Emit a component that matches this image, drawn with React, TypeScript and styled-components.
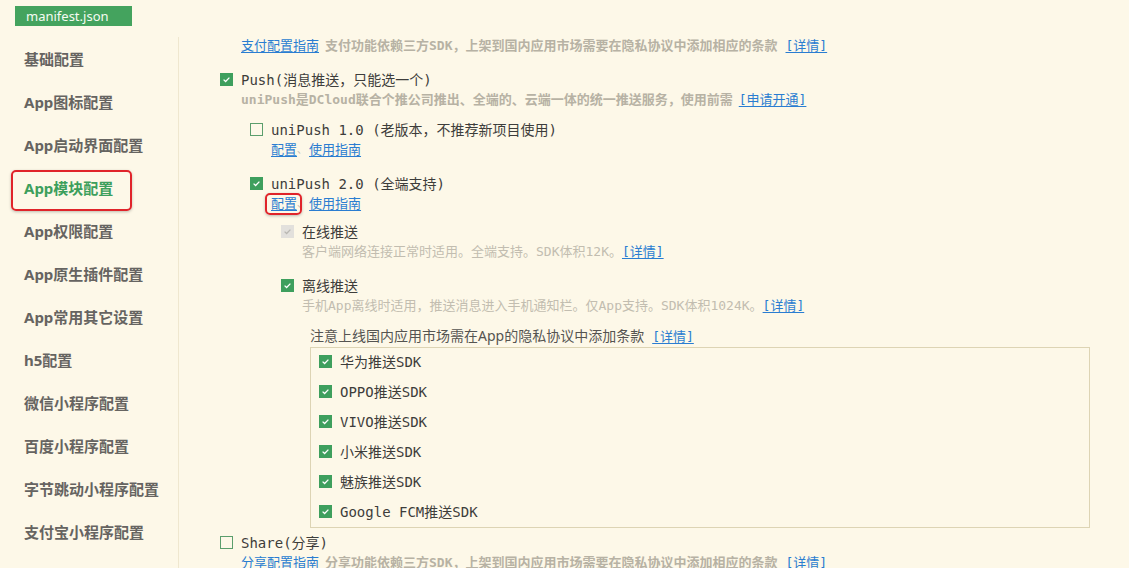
import React from 'react';
import styled, { createGlobalStyle } from 'styled-components';

const GlobalStyle = createGlobalStyle`
  html, body {
    margin: 0;
    padding: 0;
    background: #fdf8e8;
  }
  body {
    width: 1129px;
    height: 568px;
    overflow: hidden;
    font-family: 'DejaVu Sans Mono', 'Noto Sans CJK SC', monospace;
  }
`;

const MONO = `'DejaVu Sans Mono', 'Noto Sans CJK SC', monospace`;
const SANS = `'Noto Sans', 'Noto Sans CJK SC', sans-serif`;

const Page = styled.div`
  display: flex;
  flex-direction: column;
  width: 1129px;
  height: 568px;
  background: #fdf8e8;
  overflow: hidden;
`;

const Header = styled.div`
  height: 34px;
  flex-shrink: 0;
  display: flex;
  align-items: flex-start;
  padding: 6px 0 0 15px;
  box-sizing: border-box;
`;

const FileTab = styled.div`
  width: 117px;
  height: 20px;
  background: #44a35e;
  color: #f4fbf2;
  font-family: ${SANS};
  font-size: 13px;
  line-height: 20px;
  padding-left: 11px;
  box-sizing: border-box;
`;

const Body = styled.div`
  flex: 1;
  display: flex;
  min-height: 0;
`;

const Sidebar = styled.nav`
  width: 179px;
  flex-shrink: 0;
  margin-top: 3px;
  border-right: 1px solid #efe7cf;
  box-sizing: border-box;
  display: flex;
  flex-direction: column;
`;

const NavItem = styled.div<{ $active?: boolean }>`
  height: 43px;
  flex-shrink: 0;
  display: flex;
  align-items: center;
  padding-left: 24px;
  font-family: ${SANS};
  font-size: 15px;
  font-weight: 700;
  color: ${(p) => (p.$active ? '#3d9f5c' : '#666461')};
  position: relative;
`;

const Highlight = styled.span`
  position: absolute;
  left: 11px;
  top: 4px;
  width: 121px;
  height: 41px;
  border: 2px solid #e0242a;
  border-radius: 5px;
  box-sizing: border-box;
  box-shadow: 0 1px 3px rgba(0, 0, 0, 0.25);
`;

const Content = styled.main`
  flex: 1;
  padding-left: 41px;
  font-family: ${MONO};
  color: #3d3d3b;
`;

const Line = styled.div<{ $indent?: number; $mt?: number; $h?: number }>`
  display: flex;
  align-items: center;
  height: ${(p) => p.$h ?? 20}px;
  margin-left: ${(p) => p.$indent ?? 0}px;
  margin-top: ${(p) => p.$mt ?? 0}px;
  white-space: nowrap;
`;

const Label = styled.span`
  font-size: 14px;
  color: #3d3d3b;
`;

const Note = styled.span`
  font-family: ${SANS};
  font-size: 14px;
  color: #555451;
`;

const Desc = styled.span<{ $bold?: boolean; $gap?: number }>`
  font-size: 13px;
  color: ${(p) => (p.$bold ? '#b7b2a4' : '#c2bdb0')};
  font-weight: ${(p) => (p.$bold ? 700 : 400)};
  margin-right: ${(p) => p.$gap ?? 0}px;
`;

const Link = styled.a<{ $gap?: number }>`
  font-family: ${MONO};
  font-size: 13px;
  color: #2a7dd1;
  text-decoration: underline;
  text-underline-offset: 2px;
  cursor: pointer;
  margin-right: ${(p) => p.$gap ?? 0}px;
`;

const Sep = styled.span`
  font-size: 10px;
  color: #c2bdb0;
  margin-right: 2px;
`;

const Boxed = styled.span`
  position: relative;
  align-self: stretch;
  display: inline-flex;
  align-items: center;
`;

const RedFrame = styled.span`
  position: absolute;
  left: -6px;
  top: 0;
  width: 37px;
  height: 22px;
  box-sizing: border-box;
  border: 2px solid #e0242a;
  border-radius: 5px;
  box-shadow: 0 1px 3px rgba(0, 0, 0, 0.25);
`;

const Box = styled.span<{ $checked?: boolean; $disabled?: boolean }>`
  width: 13px;
  height: 13px;
  box-sizing: border-box;
  flex-shrink: 0;
  margin-right: 8px;
  display: inline-flex;
  align-items: center;
  justify-content: center;
  background: ${(p) => (p.$disabled ? '#e2e0dc' : p.$checked ? '#3e9f5d' : 'transparent')};
  border: ${(p) => (p.$checked || p.$disabled ? 'none' : '1px solid #5b9e6c')};
`;

const Check = ({ checked, disabled }: { checked?: boolean; disabled?: boolean }) => (
  <Box $checked={checked} $disabled={disabled}>
    {(checked || disabled) && (
      <svg width="9" height="9" viewBox="0 0 9 9">
        <path
          d="M1.6 4.6 L3.6 6.5 L7.4 2.6"
          fill="none"
          stroke={disabled ? '#b9b7b2' : '#ffffff'}
          strokeWidth="1.3"
        />
      </svg>
    )}
  </Box>
);

const SdkPanel = styled.div`
  margin-left: 90px;
  margin-top: 2px;
  width: 780px;
  height: 181px;
  border: 1px solid #ddd4b4;
  box-sizing: border-box;
  padding: 0 8px;
`;

const SdkRow = styled.div`
  height: 30px;
  box-sizing: border-box;
  padding-bottom: 4px;
  display: flex;
  align-items: center;
  font-size: 14px;
  color: #3d3d3b;
`;

const navItems = [
  '基础配置',
  'App图标配置',
  'App启动界面配置',
  'App模块配置',
  'App权限配置',
  'App原生插件配置',
  'App常用其它设置',
  'h5配置',
  '微信小程序配置',
  '百度小程序配置',
  '字节跳动小程序配置',
  '支付宝小程序配置',
];

const sdks = ['华为推送SDK', 'OPPO推送SDK', 'VIVO推送SDK', '小米推送SDK', '魅族推送SDK', 'Google FCM推送SDK'];

export default function App() {
  return (
    <Page>
      <GlobalStyle />
      <Header>
        <FileTab>manifest.json</FileTab>
      </Header>
      <Body>
        <Sidebar>
          {navItems.map((n) => (
            <NavItem key={n} $active={n === 'App模块配置'}>
              {n === 'App模块配置' && <Highlight />}
              {n}
            </NavItem>
          ))}
        </Sidebar>
        <Content>
          <Line $indent={21}>
            <Link $gap={6}>支付配置指南</Link>
            <Desc $bold $gap={8}>支付功能依赖三方SDK，上架到国内应用市场需要在隐私协议中添加相应的条款</Desc>
            <Link>[详情]</Link>
          </Line>

          <Line $mt={15}>
            <Check checked />
            <Label>Push(消息推送，只能选一个)</Label>
          </Line>
          <Line $indent={21} $h={18}>
            <Desc $bold $gap={6}>uniPush是DCloud联合个推公司推出、全端的、云端一体的统一推送服务，使用前需</Desc>
            <Link>[申请开通]</Link>
          </Line>

          <Line $indent={30} $mt={12}>
            <Check />
            <Label>uniPush 1.0 (老版本，不推荐新项目使用)</Label>
          </Line>
          <Line $indent={51} $h={18}>
            <Link>配置</Link>
            <Sep>、</Sep>
            <Link>使用指南</Link>
          </Line>

          <Line $indent={30} $mt={16}>
            <Check checked />
            <Label>uniPush 2.0 (全端支持)</Label>
          </Line>
          <Line $indent={51} $h={18}>
            <Boxed>
              <RedFrame />
              <Link>配置</Link>
            </Boxed>
            <Sep>、</Sep>
            <Link>使用指南</Link>
          </Line>

          <Line $indent={61} $mt={10}>
            <Check disabled />
            <Label>在线推送</Label>
          </Line>
          <Line $indent={82} $h={18}>
            <Desc>客户端网络连接正常时适用。全端支持。SDK体积12K。</Desc>
            <Link>[详情]</Link>
          </Line>

          <Line $indent={61} $mt={16}>
            <Check checked />
            <Label>离线推送</Label>
          </Line>
          <Line $indent={82} $h={18}>
            <Desc>手机App离线时适用，推送消息进入手机通知栏。仅App支持。SDK体积1024K。</Desc>
            <Link>[详情]</Link>
          </Line>

          <Line $indent={90} $mt={12}>
            <Note>注意上线国内应用市场需在App的隐私协议中添加条款</Note>
            <Link style={{ marginLeft: 8 }}>[详情]</Link>
          </Line>
          <SdkPanel>
            {sdks.map((s) => (
              <SdkRow key={s}>
                <Check checked />
                {s}
              </SdkRow>
            ))}
          </SdkPanel>

          <Line $mt={4}>
            <Check />
            <Label>Share(分享)</Label>
          </Line>
          <Line $indent={21} $h={18}>
            <Link $gap={6}>分享配置指南</Link>
            <Desc $bold $gap={8}>分享功能依赖三方SDK，上架到国内应用市场需要在隐私协议中添加相应的条款</Desc>
            <Link>[详情]</Link>
          </Line>
        </Content>
      </Body>
    </Page>
  );
}
